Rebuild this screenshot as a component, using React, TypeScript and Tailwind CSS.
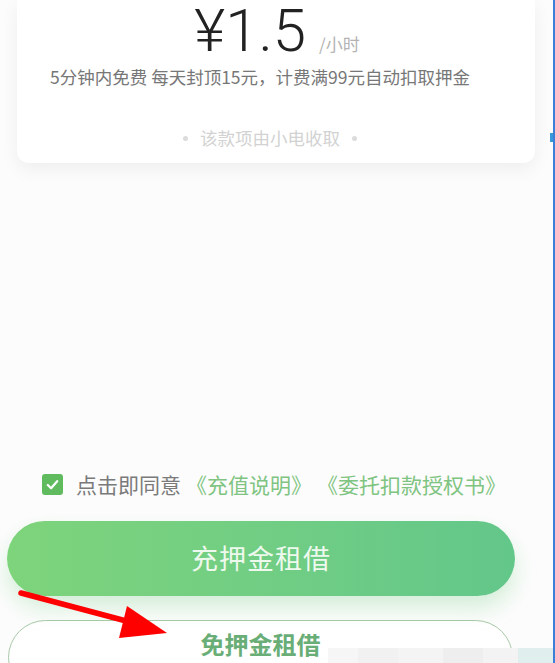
import React from 'react';

const cjk = '"Noto Sans CJK SC", "Noto Sans", sans-serif';

const Checkbox: React.FC = () => (
  <div className="w-[21px] h-[21px] rounded-[3px] bg-[#5fbb5e] flex items-center justify-center shrink-0">
    <svg width="15" height="15" viewBox="0 0 16 16" fill="none">
      <path d="M3 8.5 L6.5 12 L13 4.5" stroke="#fff" strokeWidth="2.4" strokeLinecap="round" strokeLinejoin="round" />
    </svg>
  </div>
);

// 画像上の赤い矢印（注釈）
const RedArrow: React.FC = () => (
  <svg className="absolute left-0 top-0 pointer-events-none" width="555" height="663" viewBox="0 0 555 663">
    <line x1="21" y1="593" x2="130" y2="622" stroke="#ff0000" strokeWidth="5.5" strokeLinecap="round" />
    <polygon points="127,606 167,633 119,638" fill="#ff0000" />
  </svg>
);

export default function App() {
  return (
    <div
      className="relative w-[555px] h-[663px] overflow-hidden bg-[#fcfcfc] border-r-2 border-[#3c7fd9]"
      style={{ fontFamily: cjk }}
    >
      {/* 料金カード */}
      <div className="ml-[17px] mr-[18px] bg-white rounded-b-xl shadow-[0_6px_18px_rgba(0,0,0,0.06)] pt-[2px] pb-[13px]">
        <div className="flex items-baseline justify-center pl-[2px]">
          <span className="text-[60px] leading-[58px] text-[#222] font-light" style={{ fontFamily: 'Roboto, "Liberation Sans", sans-serif' }}>
            ¥1.5
          </span>
          <span className="ml-[13px] text-[17px] leading-none text-[#b3b3b3]">/小时</span>
        </div>
        <div className="mt-[5px] text-center pr-[32px] text-[17.5px] leading-[24px] text-[#777]">
          5分钟内免费 每天封顶15元，计费满99元自动扣取押金
        </div>
        <div className="mt-[37px] flex items-center justify-center gap-[12px] pr-[12px] text-[17.5px] leading-[24px] text-[#d2d2d2]">
          <span className="w-[5px] h-[5px] rounded-full bg-[#dcdcdc]" />
          <span>该款项由小电收取</span>
          <span className="w-[5px] h-[5px] rounded-full bg-[#dcdcdc]" />
        </div>
      </div>

      {/* 同意チェック */}
      <div className="mt-[307px] ml-[42px] flex items-center h-[28px] text-[21px] leading-[28px] whitespace-nowrap">
        <Checkbox />
        <span className="ml-[13px] text-[#7a7a7a]">点击即同意</span>
        <span className="ml-[5px] text-[#7fc481]">《充值说明》</span>
        <span className="ml-[5px] text-[#7fc481]">《委托扣款授权书》</span>
      </div>

      {/* ボタン */}
      <div className="mt-[23px] ml-[7px] w-[508px]">
        <button
          type="button"
          className="w-full h-[75px] rounded-full bg-gradient-to-r from-[#7ed47b] to-[#63c78a] shadow-[0_12px_22px_rgba(110,205,125,0.28)] text-[27px] text-[#eef9ee] tracking-[1px]"
        >
          充押金租借
        </button>
      </div>
      <div className="mt-[24px] ml-[8px] w-[505px]">
        <button
          type="button"
          className="w-full h-[75px] rounded-full bg-white border-[1.5px] border-[#a9c8a9] text-[24px] font-bold text-[#6aae77] flex justify-center pt-[5px]"
        >
          免押金租借
        </button>
      </div>

      {/* 右端のマーカー */}
      <div className="absolute right-0 top-[133px] w-[3px] h-[9px] bg-[#3a9ad8]" />

      {/* 右下のモザイク */}
      <div className="absolute left-[328px] bottom-0 h-[15px] w-[225px] flex">
        <div className="w-[30px] bg-[#f6f6f6]" />
        <div className="w-[40px] bg-[#f1f1f1]" />
        <div className="w-[45px] bg-[#f4f4f4]" />
        <div className="w-[40px] bg-[#eeeeee]" />
        <div className="w-[35px] bg-[#f3f3f3]" />
        <div className="w-[35px] bg-[#e1eeee]" />
      </div>

      <RedArrow />
    </div>
  );
}
